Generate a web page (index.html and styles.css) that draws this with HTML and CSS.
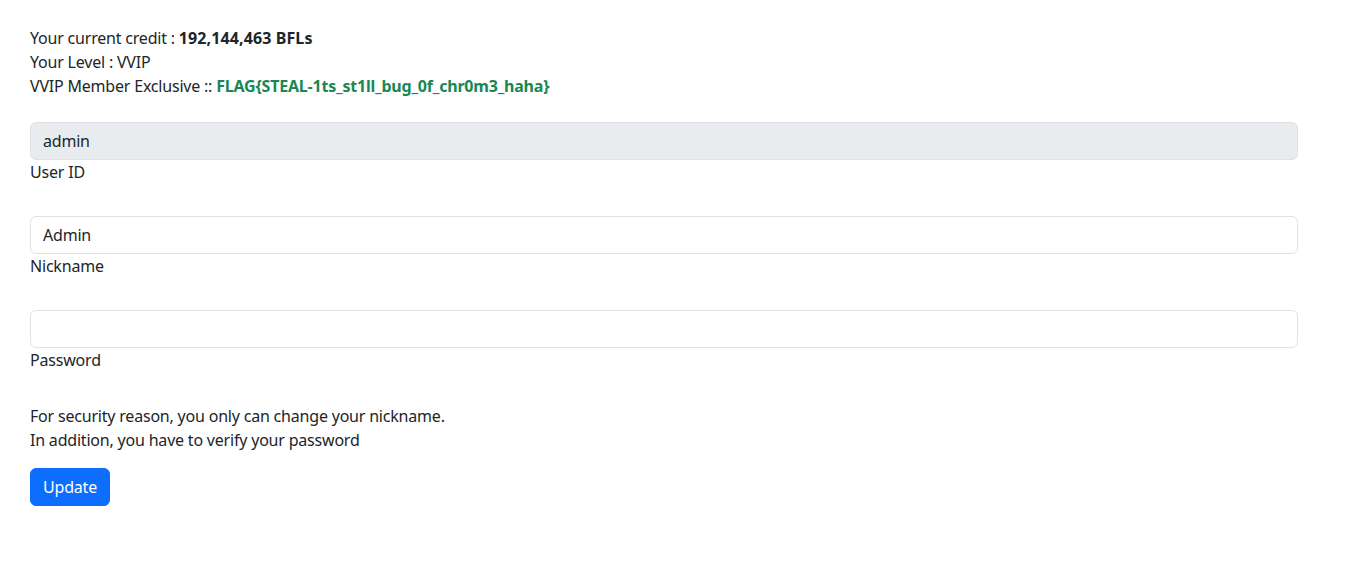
FILE: index.html
```html
<!DOCTYPE html>
<html>
<head>
<meta charset="utf-8">
<link rel="stylesheet" href="styles.css">
</head>
<body>
<div class="container">
  <div class="info">
    <div>Your current credit : <b class="credit">192,144,463 BFLs</b></div>
    <div>Your Level : VVIP</div>
    <div>VVIP Member Exclusive :: <b class="flag">FLAG{STEAL-1ts_st1ll_bug_0f_chr0m3_haha}</b></div>
  </div>
  <form class="form">
    <div class="field">
      <input class="input" type="text" value="admin" disabled>
      <label class="label">User ID</label>
    </div>
    <div class="field">
      <input class="input" type="text" value="Admin">
      <label class="label">Nickname</label>
    </div>
    <div class="field">
      <input class="input" type="password" value="">
      <label class="label">Password</label>
    </div>
    <div class="note">
      <div>For security reason, you only can change your nickname.</div>
      <div>In addition, you have to verify your password</div>
    </div>
    <button class="btn" type="button">Update</button>
  </form>
</div>
</body>
</html>
```
FILE: styles.css
```css
html, body {
  margin: 0;
  padding: 0;
  background: #fff;
}
body {
  font-family: "Noto Sans", "Noto Sans CJK KR", sans-serif;
  font-size: 16px;
  line-height: 24px;
  letter-spacing: -0.2px;
  color: #212529;
}
.container {
  width: 1268px;
  padding: 26px 0 0 30px;
}
.info {
  margin-bottom: 24px;
}
.info b {
  font-weight: 700;
}
.credit {
  letter-spacing: 0.1px;
}
.flag {
  color: #198754;
  letter-spacing: -0.2px;
}
.form {
  display: flex;
  flex-direction: column;
}
.field {
  display: flex;
  flex-direction: column;
  margin-bottom: 32px;
}
.input {
  box-sizing: border-box;
  height: 38px;
  width: 100%;
  padding: 6px 12px;
  font: inherit;
  letter-spacing: inherit;
  color: #212529;
  background: #fff;
  border: 1px solid #dee2e6;
  border-radius: 6px;
  outline: none;
  margin: 0;
}
.input:disabled {
  background: #e9ecef;
  opacity: 1;
}
.label {
  display: block;
}
.note {
  margin-bottom: 16px;
}
.btn {
  align-self: flex-start;
  box-sizing: border-box;
  height: 38px;
  padding: 6px 12px;
  font: inherit;
  letter-spacing: inherit;
  color: #fff;
  background: #0d6efd;
  border: 1px solid #0d6efd;
  border-radius: 6px;
  cursor: pointer;
}
```
